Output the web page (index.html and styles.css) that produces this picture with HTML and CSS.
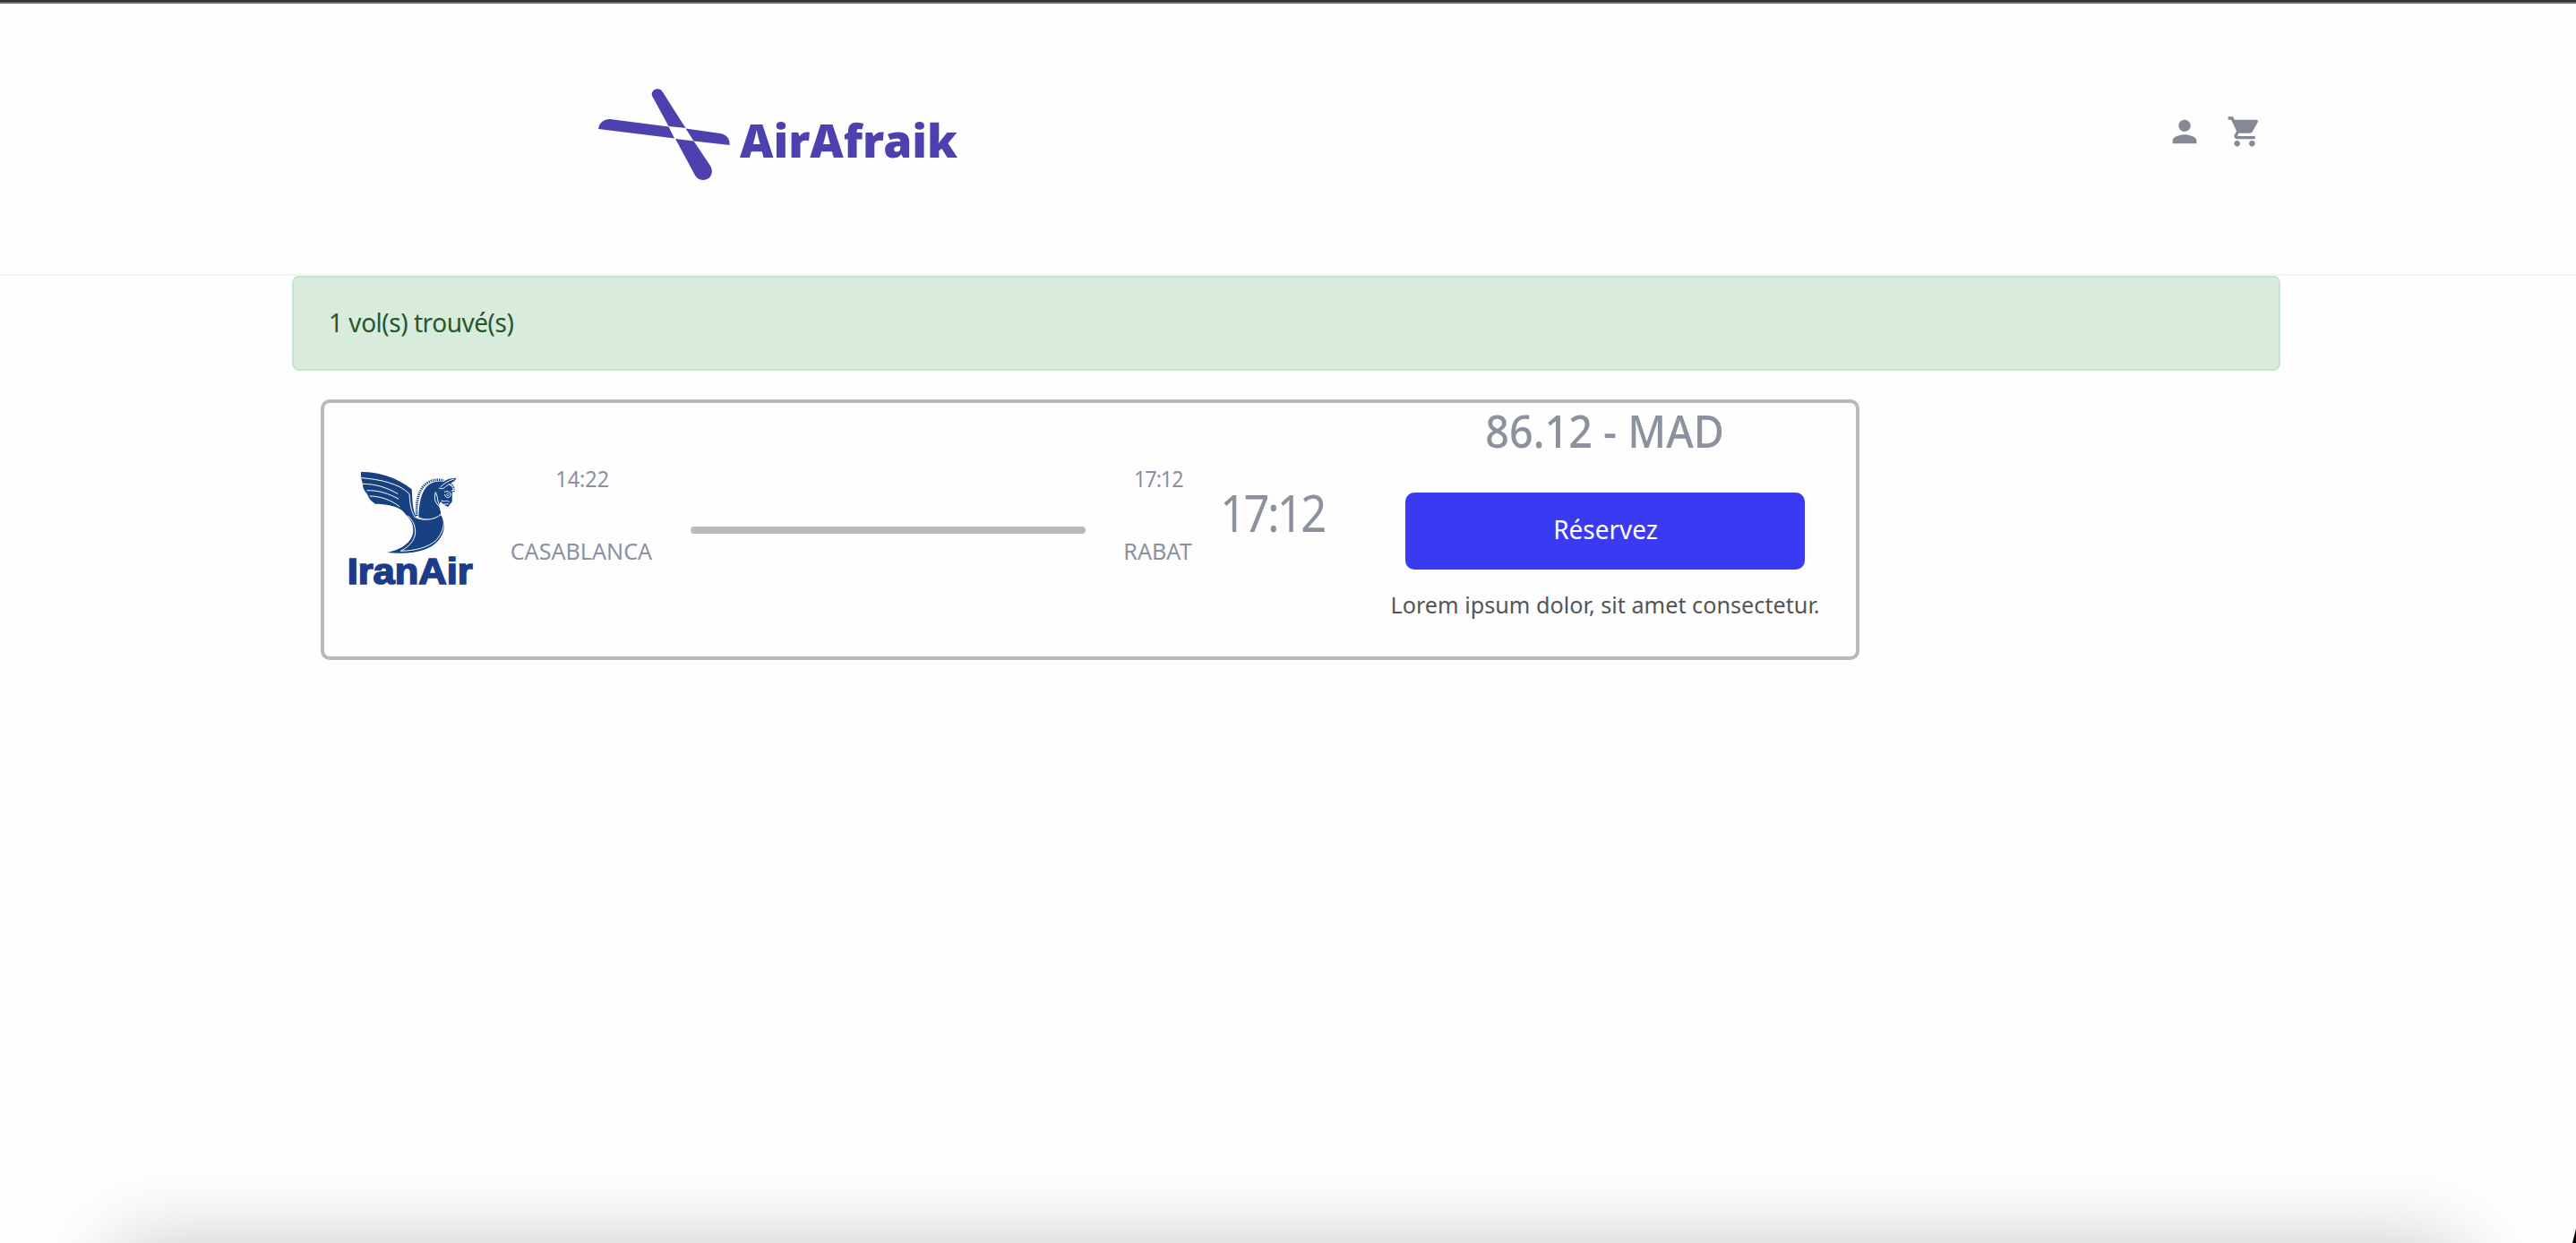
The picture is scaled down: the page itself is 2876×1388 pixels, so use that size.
FILE: index.html
```html
<!DOCTYPE html>
<html lang="fr">
<head>
<meta charset="utf-8">
<title>AirAfraik</title>
<link rel="stylesheet" href="styles.css">
</head>
<body>
<header class="header">
  <svg class="brand" viewBox="0 0 440 140" fill="#4c41af">
    <path d="M78 27C76 20 86 16 90 23L115.500 63L96.500 61Z"/>
    <path d="M18 64C19 57 24 53 31 53L96.500 61.500L103 74.500Z"/>
    <path d="M115.500 63.500L154 69C161 70 165 75 164.500 82L124.500 77.500Z"/>
    <path d="M104 75L124.500 77.500L143 105C148 114 142 121 135 121C130 121 127 118 125 114Z"/>
    <text x="176" y="96" textLength="243" lengthAdjust="spacingAndGlyphs">AirAfraik</text>
  </svg>
  <nav class="actions">
    <svg viewBox="0 0 24 24"><path d="M12 12c2.210 0 4-1.790 4-4s-1.790-4-4-4-4 1.790-4 4 1.790 4 4 4zm0 2c-2.670 0-8 1.340-8 4v2h16v-2c0-2.660-5.330-4-8-4z"/></svg>
    <svg viewBox="0 0 24 24"><path d="M7 18c-1.100 0-1.990.9-1.990 2S5.900 22 7 22s2-.9 2-2-.9-2-2-2zM1 2v2h2l3.600 7.590-1.350 2.450c-.16.28-.25.61-.25.96 0 1.100.9 2 2 2h12v-2H7.420c-.14 0-.25-.11-.25-.25l.03-.12.9-1.630h7.450c.75 0 1.410-.41 1.750-1.030l3.580-6.490c.08-.14.12-.31.12-.48 0-.55-.45-1-1-1H5.210l-.94-2H1zm16 16c-1.100 0-1.990.9-1.990 2s.89 2 1.990 2 2-.9 2-2-.9-2-2-2z"/></svg>
  </nav>
</header>
<main class="content">
  <div class="alert"><span class="alert-text">1 vol(s) trouvé(s)</span></div>
  <article class="flight">
    <svg class="airline" viewBox="0 0 540 480">
      <g fill="#174180">
        <path d="M99 51C150 50 216 66 269 109C272 145 270 174 285 204C315 216 345 207 364 191C384 215 383 253 357 282C330 313 278 329 186 321C225 314 273 291 274 247C274 213 257 204 237 180C218 164 180 158 147 158C132 148 124 138 120 125C108 112 104 100 105 91C100 78 98 64 99 51Z"/>
        <path d="M292 202C294 160 298 118 326 94C345 81 362 81 376 84L385 93C402 94 409 103 405 119L404 151L390 168L377 161L367 151C354 160 366 178 367 190C342 213 312 212 292 202Z"/>
        <path d="M362 101C371 83 389 71 418 71C414 84 397 91 382 94C373 99 369 103 362 101Z"/>
      </g>
      <path d="M286 198C283 151 291 108 321 88C342 74 360 77 376 79" fill="none" stroke="#174180" stroke-width="8" stroke-dasharray="4 3"/>
      <path d="M399 90C409 96 412 107 409 119" fill="none" stroke="#174180" stroke-width="6" stroke-dasharray="4 3"/>
      <g fill="none" stroke="#fff" stroke-width="3" stroke-linecap="round">
        <path d="M100 71C160 75 230 90 261 125C263 153 265 178 279 202C306 216 345 213 367 193C386 220 372 256 350 281C321 305 280 315 232 316C266 298 286 273 280 240C278 223 269 211 257 198"/>
        <path d="M106 91C150 91 187 104 222 124M120 113C157 112 192 123 224 141M129 132C164 132 201 145 228 167"/>
        <path d="M349 120C342 140 347 155 364 169M349 120C358 132 352 146 364 166M366 101C379 87 394 80 410 75M361 105C372 112 380 102 390 95"/>
        <path d="M379 118C391 112 402 120 400 130C394 141 380 138 380 127M369 147C380 154 386 143 394 151M375 160L391 158M402 115L409 110"/>
      </g>
      <circle cx="390" cy="127" r="4" fill="none" stroke="#fff" stroke-width="2"/>
      <text x="53" y="427" textLength="420" lengthAdjust="spacingAndGlyphs">IranAir</text>
    </svg>
    <div class="stop"><span class="hour">14:22</span><span class="city">CASABLANCA</span></div>
    <div class="track"></div>
    <div class="stop arrival"><span class="hour">17:12</span><span class="city">RABAT</span></div>
    <div class="duration"><span>17:12</span></div>
    <div class="offer">
      <strong class="price">86.12 - MAD</strong>
      <a class="book"><span>Réservez</span></a>
      <p class="note">Lorem ipsum dolor, sit amet consectetur.</p>
    </div>
  </article>
</main>
<div class="dock"><div class="dock-shadow"></div></div>
<div class="corner"></div>
</body>
</html>
```
FILE: styles.css
```css
* { box-sizing: border-box; }
body {
  margin: 0;
  height: 1388px;
  position: relative;
  overflow: hidden;
  background: #fefefe;
  font-family: "Noto Sans", "Open Sans", sans-serif;
  color: #8b919f;
}
span { display: inline-block; white-space: nowrap; }

.header {
  height: 308px;
  border-top: 2px solid #333;
  border-bottom: 2px solid #f3f3f3;
  box-shadow: inset 0 2px #666;
  display: flex;
  justify-content: space-between;
  padding: 78px 350px 0 650px;
}
.brand { width: 440px; height: 140px; }
.brand text { font-size: 51px; font-weight: 900; }
.actions { display: flex; gap: 27px; padding: 47px 0 0; }
.actions svg { width: 40px; height: 40px; fill: #868994; }

.content { width: 2220px; margin-left: 326px; }
.alert {
  height: 106px;
  padding: 0 39px 4px;
  display: flex;
  align-items: center;
  border: 2px solid #c7e5cd;
  border-radius: 8px;
  background: #d9ebdc;
  color: #275829;
  font-size: 29px;
}
.alert-text { transform: scaleX(.967); transform-origin: left; letter-spacing: -.5px; }

.flight {
  width: 1718px;
  height: 291px;
  margin: 32px 0 0 32px;
  padding-left: 8px;
  border: 4px solid #b9b9b9;
  border-radius: 10px;
  display: grid;
  grid-template-columns: 180px 200px 483px 120px 138px 1fr;
}
.airline { width: 180px; height: 160px; margin-top: 60px; }
.airline text {
  font: bold 124px "Liberation Sans", Arial, sans-serif;
  fill: #1c3b88;
  stroke: #1c3b88;
  stroke-width: 5px;
}
.stop {
  display: flex;
  flex-direction: column;
  align-items: center;
  gap: 41px;
  padding-top: 64px;
  font-size: 26px;
  line-height: 40px;
}
.hour { transform: scaleX(.9); }
.arrival .hour { letter-spacing: -1.200px; transform: scaleX(.9); }
.city { transform: translateX(-1px) scaleX(.967); }
.track {
  width: 441px;
  height: 8px;
  margin: 138px auto 0;
  border-radius: 4px;
  background: #bababa;
}
.duration {
  display: flex;
  justify-content: center;
  padding-top: 82px;
  font-size: 57px;
  line-height: 80px;
}
.duration span { letter-spacing: -3px; transform: translateX(-2px) scaleX(.89); }
.offer {
  display: flex;
  flex-direction: column;
  align-items: center;
  padding-left: 21px;
}
.price {
  margin-top: 1px;
  font-size: 50px;
  font-weight: 550;
  line-height: 60px;
  white-space: nowrap;
  transform: scaleX(.935);
}
.book {
  width: 446px;
  height: 86px;
  margin-top: 39px;
  padding-bottom: 4px;
  display: flex;
  align-items: center;
  justify-content: center;
  border-radius: 10px;
  background: #3a3af3;
  color: #fff;
  font-size: 28.500px;
}
.book span { transform: scaleX(.98); }
.note {
  margin: 19px 0 0;
  font-size: 26px;
  line-height: 40px;
  white-space: nowrap;
  color: #555;
  transform: scaleX(.97);
}

.dock {
  position: absolute;
  left: 0;
  right: 0;
  bottom: 0;
  height: 140px;
  overflow: hidden;
}
.dock-shadow {
  height: 300px;
  margin: 144px 125px 0;
  border-radius: 40px;
  box-shadow: 0 0 95px rgba(0, 0, 0, .24);
}
.corner {
  position: absolute;
  right: 0;
  bottom: 0;
  width: 4px;
  height: 16px;
  background: #000;
  clip-path: polygon(100% 0, 100% 100%, 0 100%);
}
```
